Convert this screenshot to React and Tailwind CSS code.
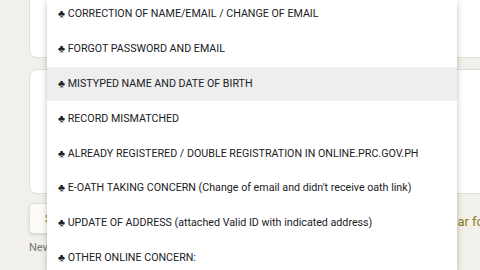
const OPTIONS = [
  'CORRECTION OF NAME/EMAIL / CHANGE OF EMAIL',
  'FORGOT PASSWORD AND EMAIL',
  'MISTYPED NAME AND DATE OF BIRTH',
  'RECORD MISMATCHED',
  'ALREADY REGISTERED / DOUBLE REGISTRATION IN ONLINE.PRC.GOV.PH',
  "E-OATH TAKING CONCERN (Change of email and didn't receive oath link)",
  'UPDATE OF ADDRESS (attached Valid ID with indicated address)',
  'OTHER ONLINE CONCERN:',
];

export default function App() {
  return (
    <div className="relative w-[480px] h-[270px] overflow-hidden bg-[#f1f0ea] font-['Roboto',sans-serif]">
      {/* form behind the menu */}
      <div className="pl-[29px] flex flex-col">
        <div className="w-[640px] h-[68px] mt-[-10px] bg-white border border-[#e0ded6] rounded-lg" />
        <div className="w-[640px] h-[125px] mt-[11px] bg-white border border-[#e0ded6] rounded-lg" />
        <div className="flex items-center mt-[9px]">
          <div className="w-[70px] h-[31px] rounded bg-[#fdfcf8] border border-[#e0ded6] shadow-sm flex items-center pl-[15px] text-[12px] text-[#8a7d1c]">
            Submit
          </div>
          <div className="ml-[355px] mt-[6px] text-[13px] text-[#8a7d1c] whitespace-nowrap">Clear form</div>
        </div>
        <div className="mt-[6px] text-[11px] text-[#70757a] whitespace-nowrap">
          Never submit passwords through Google Forms.
        </div>
      </div>

      {/* dropdown menu */}
      <div className="absolute left-[47px] top-0 w-[410px] h-[270px] bg-white shadow-[0_2px_6px_rgba(0,0,0,0.25)] overflow-hidden">
        <div className="mt-[-3px] flex flex-col">
          {OPTIONS.map((o, i) => (
            <div
              key={o}
              className={`h-[34.8px] shrink-0 flex items-center pl-[11px] text-[10.7px] text-[#202124] whitespace-nowrap ${i === 2 ? 'bg-[#eeeeee]' : ''}`}
            >
              ♣ {o}
            </div>
          ))}
        </div>
      </div>
    </div>
  );
}
